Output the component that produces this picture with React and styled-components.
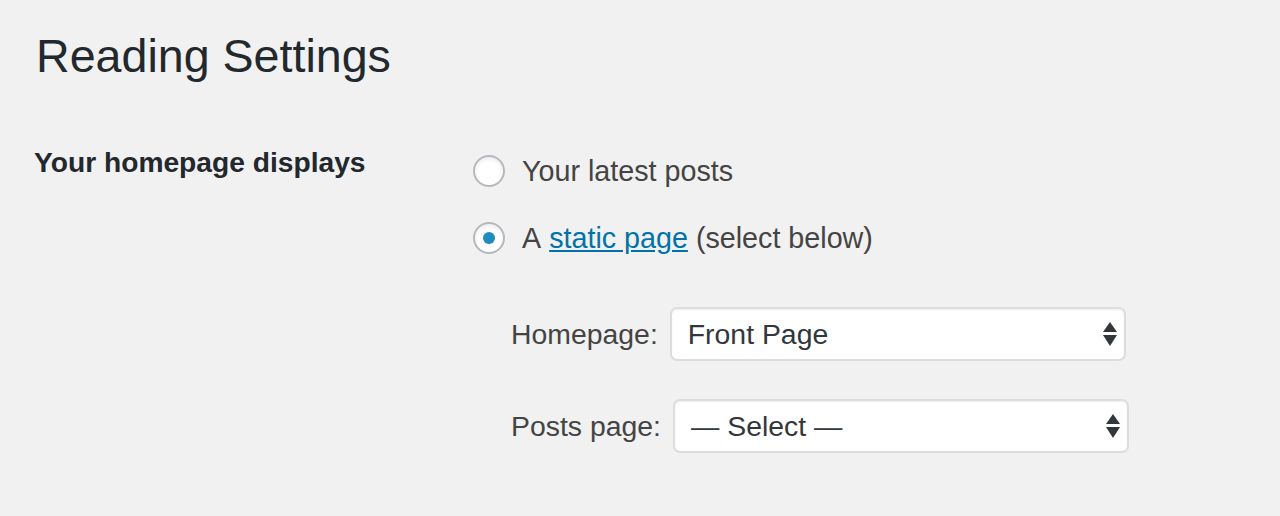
import React from "react";
import styled, { createGlobalStyle } from "styled-components";

const Global = createGlobalStyle`
  html, body { margin: 0; padding: 0; background: #f1f1f1; }
  body { font-family: "Liberation Sans", Arial, sans-serif; color: #444; }
`;

const Page = styled.div`
  padding: 28px 0 0 34px;
  min-height: 516px;
  box-sizing: border-box;
`;

const Title = styled.h1`
  margin: 0 0 0 2px;
  font-size: 46.6px;
  line-height: 56px;
  font-weight: 400;
  color: #23282d;
`;

const FormGrid = styled.div`
  display: grid;
  grid-template-columns: 439px 1fr;
  margin-top: 58px;
`;

const RowLabel = styled.div`
  font-size: 28.2px;
  line-height: 40px;
  font-weight: 700;
  color: #23282d;
`;

const Options = styled.div`
  padding-top: 9px;
  display: flex;
  flex-direction: column;
`;

const RadioRow = styled.label`
  display: flex;
  align-items: center;
  gap: 17px;
  font-size: 28.7px;
  line-height: 40px;
  color: #444;
  margin-bottom: ${(p) => p.$mb || 0}px;
`;

const RadioCircle = styled.span`
  width: 32px;
  height: 32px;
  box-sizing: border-box;
  border-radius: 50%;
  border: 2px solid #b4b9be;
  background: #fff;
  box-shadow: inset 0 2px 4px rgba(0, 0, 0, 0.08);
  display: flex;
  align-items: center;
  justify-content: center;
  flex-shrink: 0;
  &::after {
    content: "";
    display: ${(p) => (p.$checked ? "block" : "none")};
    width: 12px;
    height: 12px;
    border-radius: 50%;
    background: #1e8cbe;
  }
`;

const Link = styled.a`
  color: #0073aa;
  text-decoration: underline;
  margin: 0 8px;
`;

const SelectRow = styled.div`
  display: flex;
  align-items: center;
  gap: 12px;
  margin-left: 38px;
  margin-top: ${(p) => p.$mt}px;
`;

const SelectLabel = styled.span`
  font-size: 28.4px;
  line-height: 40px;
  color: #444;
`;

const SelectBox = styled.div`
  width: 456px;
  height: 54px;
  box-sizing: border-box;
  border: 2px solid #ddd;
  border-radius: 7px;
  background: #fff;
  box-shadow: inset 0 1px 2px rgba(0, 0, 0, 0.07);
  display: flex;
  align-items: center;
  justify-content: space-between;
  padding: 0 6px 0 16px;
  font-size: 28.4px;
  color: #32373c;
`;

const Arrows = () => (
  <svg width="16" height="26" viewBox="0 0 16 26">
    <polygon points="8,1 15,11 1,11" fill="#32373c" />
    <polygon points="1,14 15,14 8,25" fill="#32373c" />
  </svg>
);

export default function App() {
  return (
    <>
      <Global />
      <Page>
        <Title>Reading Settings</Title>
        <FormGrid>
          <RowLabel>Your homepage displays</RowLabel>
          <Options>
            <RadioRow $mb={27}>
              <RadioCircle />
              <span>Your latest posts</span>
            </RadioRow>
            <RadioRow>
              <RadioCircle $checked />
              <span>
                A<Link href="#">static page</Link>(select below)
              </span>
            </RadioRow>
            <SelectRow $mt={49}>
              <SelectLabel>Homepage:</SelectLabel>
              <SelectBox>
                <span>Front Page</span>
                <Arrows />
              </SelectBox>
            </SelectRow>
            <SelectRow $mt={38}>
              <SelectLabel>Posts page:</SelectLabel>
              <SelectBox>
                <span>— Select —</span>
                <Arrows />
              </SelectBox>
            </SelectRow>
          </Options>
        </FormGrid>
      </Page>
    </>
  );
}
